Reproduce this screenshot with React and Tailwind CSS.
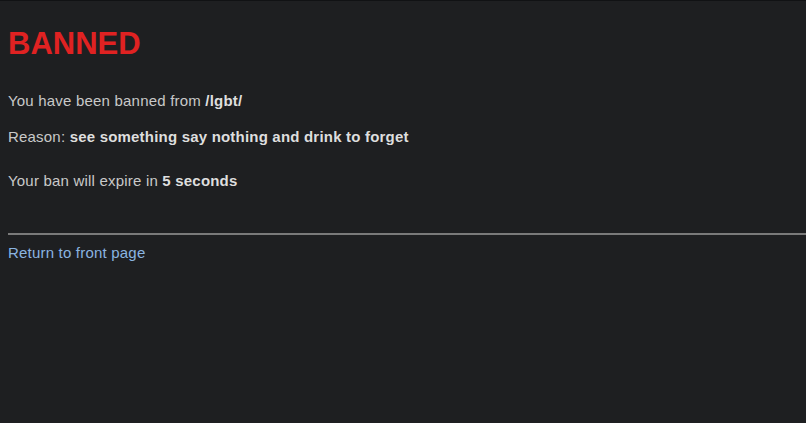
export default function App() {
  return (
    <div
      className="min-h-[423px] w-full bg-[#1e1f21] border-t border-[#111214] pl-2 text-[15px] leading-[20px] tracking-[0.2px] text-[#c9c9c9]"
      style={{ fontFamily: '"Liberation Sans", Arial, sans-serif' }}
    >
      <h1 className="pt-[26px] text-[31px] leading-[34px] tracking-[0px] font-bold text-[#e02222]">BANNED</h1>
      <p className="mt-[30px]">
        You have been banned from <b className="text-[#dedede]">/lgbt/</b>
      </p>
      <p className="mt-[16px]">
        Reason: <b className="text-[#dedede]">see something say nothing and drink to forget</b>
      </p>
      <p className="mt-[24px]">
        Your ban will expire in <b className="text-[#dedede]">5 seconds</b>
      </p>
      <hr className="mt-[42px] border-0 h-[2px] bg-[#7a7a7a]" />
      <a href="#" className="block mt-[8px] text-[#8ab4e0]">
        Return to front page
      </a>
    </div>
  );
}
